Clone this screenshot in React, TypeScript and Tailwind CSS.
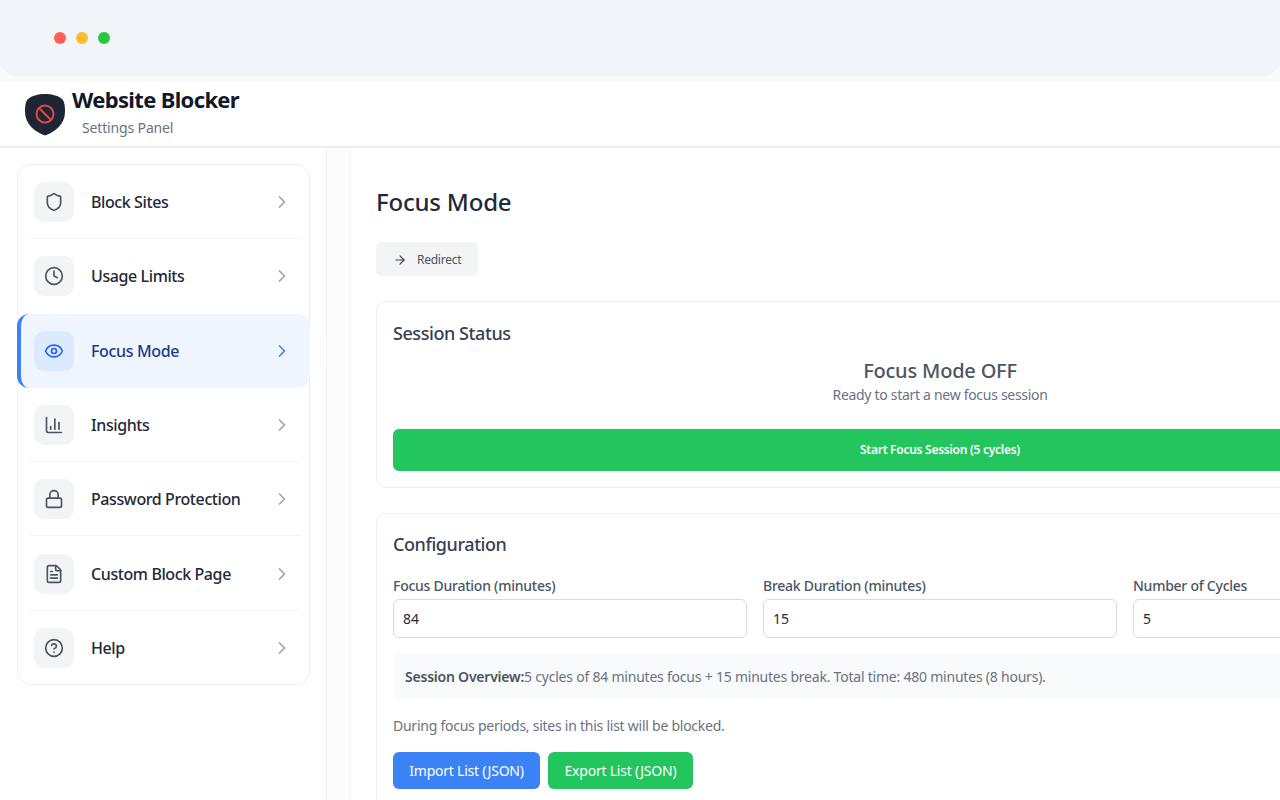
import { ArrowRight, ChartColumn, ChevronRight, CircleHelp, Clock, Eye, FileText, Lock, Shield } from "lucide-react";

const navItems = [
  { label: "Block Sites", icon: Shield },
  { label: "Usage Limits", icon: Clock },
  { label: "Focus Mode", icon: Eye, active: true },
  { label: "Insights", icon: ChartColumn },
  { label: "Password Protection", icon: Lock },
  { label: "Custom Block Page", icon: FileText },
  { label: "Help", icon: CircleHelp },
];

const fields = [
  { label: "Focus Duration (minutes)", value: "84" },
  { label: "Break Duration (minutes)", value: "15" },
  { label: "Number of Cycles", value: "5" },
];

function Logo() {
  return (
    <svg width="40" height="42" viewBox="0 0 40 42" className="shrink-0 mt-[2px]">
      <path d="M20 0 C27 0 34 2 37 5 C39.500 7.500 40 12 40 18 C40 30 30 38 20 41.500 C10 38 0 30 0 18 C0 12 0.500 7.500 3 5 C6 2 13 0 20 0 Z" fill="#1e2533" />
      <circle cx="20" cy="20" r="8.500" fill="none" stroke="#dc4a4a" strokeWidth="2" />
      <path d="M14 14 L26 26" stroke="#dc4a4a" strokeWidth="2" />
    </svg>
  );
}

function NavRow({ item, divider }: { item: (typeof navItems)[number]; divider: boolean }) {
  const Icon = item.icon;
  if (item.active) {
    return (
      <div className="flex items-center h-[74.300px] -mx-px bg-[#eff6ff] rounded-[12px] border-l-4 border-[#3b82f6] pl-[13px] pr-[18px]">
        <div className="w-10 h-10 rounded-[10px] bg-[#dbeafe] flex items-center justify-center">
          <Icon className="w-5 h-5 text-[#2563eb]" strokeWidth={2} />
        </div>
        <span className="ml-[17px] flex-1 text-[16px] font-medium text-[#1e3a8a] tracking-[-0.35px]">{item.label}</span>
        <ChevronRight className="w-5 h-5 text-[#3b82f6]" strokeWidth={2} />
      </div>
    );
  }
  return (
    <div className="relative flex items-center h-[74.300px] pl-[16px] pr-[17px]">
      <div className="w-10 h-10 rounded-[10px] bg-[#f3f4f6] flex items-center justify-center">
        <Icon className="w-5 h-5 text-[#4b5563]" strokeWidth={2} />
      </div>
      <span className="ml-[17px] flex-1 text-[16px] font-medium text-[#1f2937] tracking-[-0.4px]">{item.label}</span>
      <ChevronRight className="w-5 h-5 text-[#9ca3af]" strokeWidth={2} />
      {divider && <div className="absolute left-[12px] right-[8px] bottom-0 h-px bg-[#f3f4f6]" />}
    </div>
  );
}

export default function App() {
  return (
    <div className="w-[1280px] h-[800px] overflow-hidden bg-white flex flex-col font-['Noto_Sans',sans-serif]">
      {/* window chrome */}
      <div className="bg-[#f8fafc] h-[82px] shrink-0">
        <div className="h-[76px] bg-[#f1f5f9] rounded-b-[16px] flex items-center gap-[10px] pl-[54px]">
          <span className="w-3 h-3 rounded-full bg-[#ff5f57]" />
          <span className="w-3 h-3 rounded-full bg-[#febc2e]" />
          <span className="w-3 h-3 rounded-full bg-[#28c840]" />
        </div>
      </div>

      <header className="h-[66px] shrink-0 bg-white border-b-2 border-[#eceef1] flex items-center pl-[25px]">
        <Logo />
        <div className="ml-[7px] -mt-[7px]">
          <h1 className="text-[22px] leading-[30px] font-bold text-[#111827] tracking-[-0.65px]">Website Blocker</h1>
          <p className="ml-[10px] mt-[4px] text-[14px] leading-[20px] text-[#6b7280] tracking-[-0.15px]">Settings Panel</p>
        </div>
      </header>

      <div className="flex flex-1 min-h-0">
        <aside className="w-[327px] shrink-0 bg-white border-r border-[#f0f1f3] pl-[17px] pr-[16px] pt-[16px]">
          <nav className="w-[293px] h-[521px] border border-[#eceef1] rounded-[14px] bg-white">
            {navItems.map((item, i) => (
              <NavRow key={item.label} item={item} divider={i === 0 || i >= 3 && i < navItems.length - 1} />
            ))}
          </nav>
        </aside>

        <div className="w-[23px] shrink-0 bg-[#fcfcfd]" />

        <main className="flex-1 min-w-0 bg-white border-l border-[#f5f6f7] pl-[25px] pt-[38px]">
          <h2 className="text-[24px] leading-[32px] font-medium text-[#1f2937] tracking-[-0.2px]">Focus Mode</h2>

          <button className="mt-[24px] h-[34px] w-[102px] rounded-[6px] bg-[#f3f4f6] flex items-center pl-[17px] pt-px text-[12px] text-[#4b5563] tracking-[-0.25px]">
            <ArrowRight className="w-[14px] h-[14px] text-[#374151]" strokeWidth={2} />
            <span className="ml-[10px]">Redirect</span>
          </button>

          <section className="mt-[25px] w-[1128px] h-[187px] border border-[#eceef1] rounded-[10px] bg-white px-[16px] pt-[17px]">
            <h3 className="text-[18px] leading-[28px] font-medium text-[#374151] tracking-[-0.43px]">Session Status</h3>
            <div className="mt-[10px] text-center">
              <p className="text-[20px] leading-[28px] font-medium text-[#4b5563] tracking-[-0.2px]">Focus Mode OFF</p>
              <p className="text-[14px] leading-[20px] text-[#6b7280] tracking-[-0.3px]">Ready to start a new focus session</p>
            </div>
            <button className="mt-[24px] w-full h-[42px] rounded-[6px] bg-[#22c55e] text-white text-[12px] font-semibold tracking-[-0.27px]">
              Start Focus Session (5 cycles)
            </button>
          </section>

          <section className="mt-[25px] w-[1128px] h-[320px] border border-[#eceef1] rounded-[10px] bg-white px-[16px] pt-[16px]">
            <h3 className="text-[18px] leading-[28px] font-medium text-[#374151] tracking-[-0.43px]">Configuration</h3>
            <div className="mt-[18px] grid grid-cols-3 gap-4">
              {fields.map((f) => (
                <label key={f.label} className="block">
                  <span className="block text-[14px] leading-[20px] font-medium text-[#4b5563] tracking-[-0.25px]">{f.label}</span>
                  <span className="mt-[3px] flex items-center h-[39px] px-[9px] border border-[#d8dade] rounded-[6px] text-[14px] text-[#1f2937] bg-white">{f.value}</span>
                </label>
              ))}
            </div>
            <div className="mt-[15px] h-[46px] rounded-[6px] bg-[#f8fafc] flex items-center px-[12px] text-[14px] text-[#6b7280] tracking-[-0.22px]">
              <strong className="font-semibold text-[#4b5563]">Session Overview:</strong>
              <span>5 cycles of 84 minutes focus + 15 minutes break. Total time: 480 minutes (8 hours).</span>
            </div>
            <p className="mt-[17px] text-[14px] leading-[20px] text-[#6b7280] tracking-[-0.25px]">During focus periods, sites in this list will be blocked.</p>
            <div className="mt-[16px] flex gap-2">
              <button className="h-[37px] w-[147px] rounded-[6px] bg-[#3b82f6] text-white text-[14px] tracking-[-0.22px]">Import List (JSON)</button>
              <button className="h-[37px] w-[145px] rounded-[6px] bg-[#22c55e] text-white text-[14px] tracking-[-0.22px]">Export List (JSON)</button>
            </div>
          </section>
        </main>
      </div>
    </div>
  );
}
